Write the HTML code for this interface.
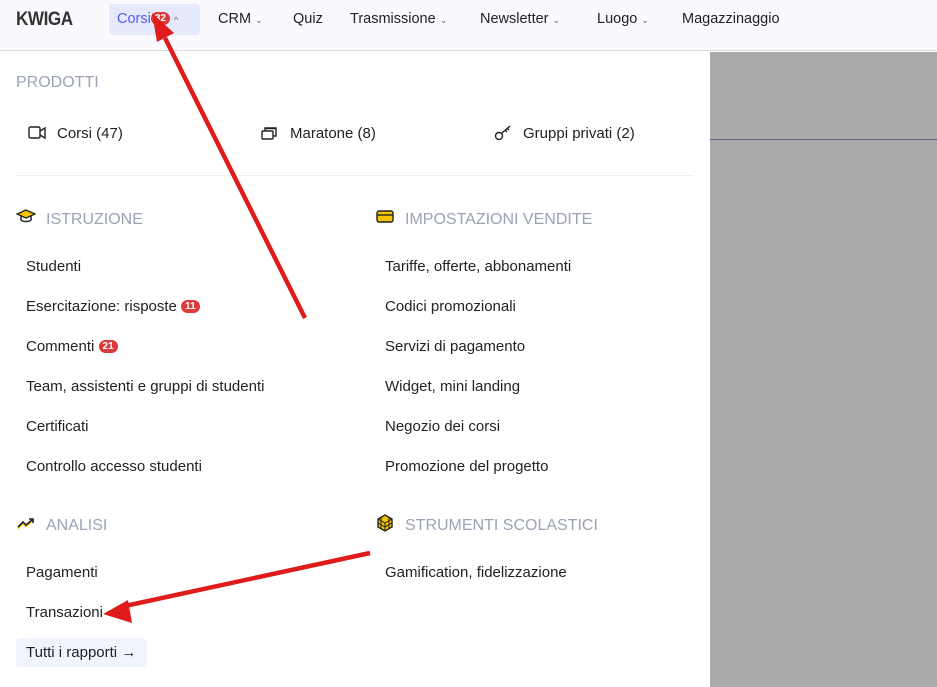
<!DOCTYPE html>
<html><head><meta charset="utf-8"><style>
*{margin:0;padding:0;box-sizing:border-box}
body{width:937px;height:687px;overflow:hidden;background:#fff;font-family:"Liberation Sans",sans-serif;color:#222;position:relative;font-size:14px}
.hdr{position:absolute;left:0;top:0;width:937px;height:51px;background:#f9f9fe;border-bottom:1px solid #dcdce4}
.hdr>span{position:absolute;top:11px;font-size:14.5px;color:#222}
.logo{left:16px;font-weight:bold;font-size:19px!important;top:9px!important;letter-spacing:-0.5px;color:#333!important;transform:scaleX(0.9);transform-origin:left}
.act{position:absolute;left:109px;top:4px;width:91px;height:31px;background:#e6e8fb;border-radius:4px}
.badge{display:inline-block;background:#dc3b3b;color:#fff;font-size:10px;font-weight:bold;border-radius:7px;padding:1px 4px;vertical-align:2px;line-height:11px}
.chev{font-size:9px;color:#666}
.gray{position:absolute;left:710px;top:52px;width:227px;height:635px;background:#aaa}
.gray i{position:absolute;left:0;top:87px;width:227px;height:1px;background:#5a6480}
.t{position:absolute;font-size:15px;color:#222;top:0}
.h{position:absolute;font-size:16px;color:#9aa3b3}
.sep{position:absolute;left:16px;top:175px;width:678px;height:1px;background:#eee}
.btn{position:absolute;left:16px;top:638px;width:131px;height:29px;background:#eff4fd;border-radius:4px;padding:6px 10px;font-size:15px}
</style></head><body>
<div class="hdr">
<div class="act"></div>
<span class="logo">KWIGA</span>
<span style="left:117px;color:#4e5ef0">Corsi<span class="badge">32</span> <span class="chev">^</span></span>
<span style="left:218px">CRM <span class="chev">⌄</span></span>
<span style="left:293px">Quiz</span>
<span style="left:350px">Trasmissione <span class="chev">⌄</span></span>
<span style="left:480px">Newsletter <span class="chev">⌄</span></span>
<span style="left:597px">Luogo <span class="chev">⌄</span></span>
<span style="left:682px">Magazzinaggio</span>
</div>
<div class="gray"><i></i></div>
<div class="h" style="left:16px;top:74px">PRODOTTI</div>
<svg style="position:absolute;left:28px;top:126px" width="19" height="14" fill="none" stroke="#222" stroke-width="1.4"><rect x="1" y="1" width="11" height="11" rx="1.5"/><path d="M12 5l5-3v10l-5-3"/></svg>
<div class="t" style="left:57px;top:125px">Corsi (47)</div>
<svg style="position:absolute;left:261px;top:125px" width="18" height="16" fill="none" stroke="#222" stroke-width="1.4"><rect x="1" y="6" width="11" height="8" rx="1"/><path d="M4 6V3h11v8h-3M4 3.5h11"/></svg>
<div class="t" style="left:290px;top:125px">Maratone (8)</div>
<svg style="position:absolute;left:494px;top:124px" width="18" height="17" fill="none" stroke="#222" stroke-width="1.4"><circle cx="5" cy="12" r="3.5"/><path d="M8 9l8-7M13 4l2 2M11 6l2 2"/></svg>
<div class="t" style="left:523px;top:125px">Gruppi privati (2)</div>
<div class="sep"></div>
<svg style="position:absolute;left:16px;top:209px" width="20" height="14"><path d="M10 1L1 5l9 4 9-4z" fill="#f4c400" stroke="#222" stroke-width="1.3"/><path d="M5 7v4c2 2 8 2 10 0V7" fill="none" stroke="#222" stroke-width="1.5"/></svg>
<div class="h" style="left:46px;top:211px">ISTRUZIONE</div>
<svg style="position:absolute;left:376px;top:210px" width="18" height="13"><rect x="1" y="1" width="16" height="11" rx="2" fill="#f4c400" stroke="#222" stroke-width="1.4"/><path d="M1 5h16" stroke="#222" stroke-width="1.4"/></svg>
<div class="h" style="left:405px;top:211px">IMPOSTAZIONI VENDITE</div>
<div class="t" style="left:26px;top:258px">Studenti</div>
<div class="t" style="left:26px;top:298px">Esercitazione: risposte <span class="badge">11</span></div>
<div class="t" style="left:26px;top:338px">Commenti <span class="badge">21</span></div>
<div class="t" style="left:26px;top:378px">Team, assistenti e gruppi di studenti</div>
<div class="t" style="left:26px;top:418px">Certificati</div>
<div class="t" style="left:26px;top:458px">Controllo accesso studenti</div>
<div class="t" style="left:385px;top:258px">Tariffe, offerte, abbonamenti</div>
<div class="t" style="left:385px;top:298px">Codici promozionali</div>
<div class="t" style="left:385px;top:338px">Servizi di pagamento</div>
<div class="t" style="left:385px;top:378px">Widget, mini landing</div>
<div class="t" style="left:385px;top:418px">Negozio dei corsi</div>
<div class="t" style="left:385px;top:458px">Promozione del progetto</div>
<svg style="position:absolute;left:17px;top:517px" width="19" height="12" fill="none" stroke-width="1.6"><path d="M1 10l5-5 3 3 7-6" stroke="#f4c400" transform="translate(0,1.5)"/><path d="M1 10l5-5 3 3 7-6M12 2h4v4" stroke="#222"/></svg>
<div class="h" style="left:46px;top:517px">ANALISI</div>
<svg style="position:absolute;left:376px;top:514px" width="18" height="18"><path d="M9 1l7 4v8l-7 4-7-4V5z" fill="#f4c400" stroke="#222" stroke-width="1.4"/><path d="M2 9l7 4 7-4M5 3v12M13 3v12M2 5l7 4 7-4M9 9v8" stroke="#222" stroke-width="1" fill="none"/></svg>
<div class="h" style="left:405px;top:517px">STRUMENTI SCOLASTICI</div>
<div class="t" style="left:26px;top:564px">Pagamenti</div>
<div class="t" style="left:26px;top:604px">Transazioni</div>
<div class="t" style="left:385px;top:564px">Gamification, fidelizzazione</div>
<div class="btn">Tutti i rapporti →</div>
<svg style="position:absolute;left:0;top:0" width="937" height="687">
<path d="M305 318L165 38" stroke="#e01b1b" stroke-width="4.5"/>
<path d="M152 13l22 20-17 9z" fill="#e01b1b"/>
<path d="M370 553L125 606" stroke="#e01b1b" stroke-width="4.5"/>
<path d="M103 614l25-14 4 23z" fill="#e01b1b"/>
</svg>
</body></html>
